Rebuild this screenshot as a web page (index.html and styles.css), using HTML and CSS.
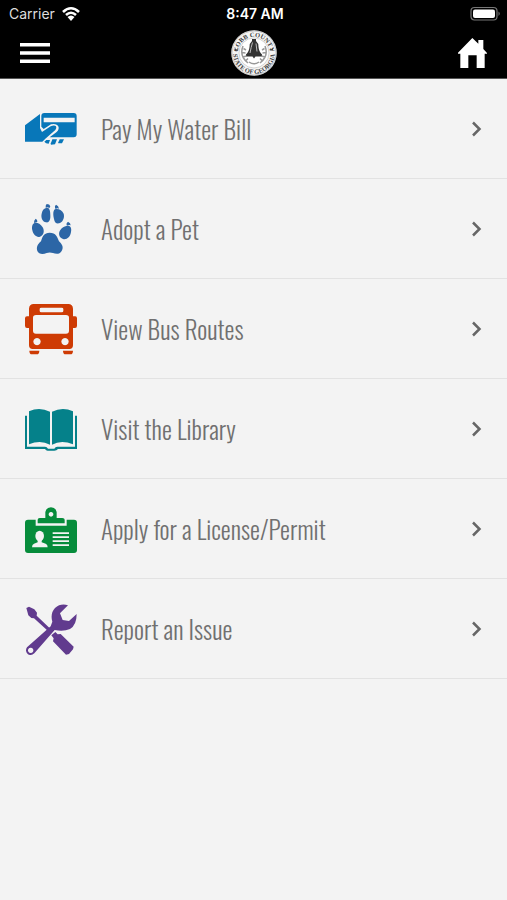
FILE: index.html
```html
<!DOCTYPE html>
<html lang="en">
<head>
<meta charset="utf-8">
<meta name="viewport" content="width=device-width, initial-scale=1">
<title>Cobb County</title>
<link rel="stylesheet" href="styles.css">
</head>
<body>
<header class="header">
  <div class="status">
    <div class="carrier">
      <span>Carrier</span>
      <svg width="20" height="16" viewBox="0 0 20 16" aria-hidden="true">
        <path d="M2 6Q10-1.500 18 6M5 9Q10 4.500 15 9" fill="none" stroke="#fff" stroke-width="2.600"/>
        <path d="M6.500 11Q10 8 13.500 11L10 15Z" fill="#fff"/>
      </svg>
    </div>
    <span class="time">8:47 AM</span>
    <svg class="battery" width="31" height="16" viewBox="0 0 31 16" aria-hidden="true">
      <rect x="1" y="1.500" width="26" height="12.500" rx="3.500" fill="#000" stroke="#777" stroke-width="1.200"/>
      <rect x="3" y="3.500" width="22" height="8.500" rx="2" fill="#fff"/>
      <path d="M28.500 5.500Q31 7.500 28.500 10Z" fill="#777"/>
    </svg>
  </div>
  <nav class="nav">
    <button class="nav-button" type="button" aria-label="Menu">
      <svg width="30" height="20" viewBox="0 0 30 20"><path d="M0 0h30v3.500H0zM0 8.250h30v3.500H0zM0 16.500h30v3.500H0z" fill="#fff"/></svg>
    </button>
    <svg class="seal" width="46" height="46" viewBox="0 0 92 92" role="img" aria-label="Cobb County seal">
      <defs>
        <path id="arc-top" d="M14 46A32 32 0 0 1 78 46"/>
        <path id="arc-bottom" d="M4 46A42 42 0 0 0 88 46"/>
      </defs>
      <circle cx="46" cy="46" r="45.500" fill="#f4f4f4"/>
      <circle cx="46" cy="46" r="44" fill="none" stroke="#999" stroke-width="1"/>
      <circle cx="46" cy="46" r="30" fill="#fff" stroke="#aaa" stroke-width="1"/>
      <text class="seal-text"><textPath href="#arc-top" startOffset="50%" text-anchor="middle">COBB COUNTY</textPath></text>
      <text class="seal-text"><textPath href="#arc-bottom" startOffset="50%" text-anchor="middle">STATE OF GEORGIA</textPath></text>
      <path d="M8 36l3 3 3-3-1 5-5 0zM84 36l-3 3-3-3 1 5 5 0z" fill="#444"/>
      <path d="M42 18h8v4q5 4 5 12 1 10 7 15v4H49l-3 4-3-4H30v-4q6-5 7-15 0-8 5-12z" fill="#333"/>
      <path d="M43 25q-3 10-5 21M50 27l2 16" stroke="#bbb" stroke-width="2" fill="none"/>
      <path d="M24 32q-8 20 10 34M68 32q8 20-10 34M25 37l5 3M22 45l7 1M24 54l7-2M29 62l5-5M67 37l-5 3M70 45l-7 1M68 54l-7-2M63 62l-5-5M36 64q10 7 20 0" fill="none" stroke="#999" stroke-width="3"/>
    </svg>
    <a class="nav-button" href="#" aria-label="Home">
      <svg width="29" height="30" viewBox="0 0 87 90"><path d="M43 0l18 17v-11h15v27l11 12v2h-7v43H56V52H31v38H7V47H0v-3z" fill="#fff"/></svg>
    </a>
  </nav>
</header>
<main>
  <ul class="list">
    <li><a class="row" href="#">
      <svg class="icon" viewBox="30 9 156 156" fill="#0877b9" aria-hidden="true">
        <path d="M30 76L75 42V84L81 96 107 79Q118 74 123 79 126 84 121 90L91 116 82 125H30z"/>
        <path fill-rule="evenodd" d="M88 39H176Q185 39 185 48V103Q185 112 176 112H104L124 97Q135 86 129 77 122 69 108 73L86 87 79 80V48Q79 39 88 39zM86 53V67H179V53z"/>
        <path d="M94 120h11l-4 11q-9 0-13-6zM112 118h14l-6 15-12 1q-3-3 1-8zM134 118h13l-6 12h-11q-2-3 2-7z"/>
      </svg>
      <span class="label">Pay My Water Bill</span>
      <svg class="chevron" viewBox="0 0 12 16" aria-hidden="true"><path d="M2 1.500L8.500 8 2 14.500"/></svg>
    </a></li>
    <li><a class="row" href="#">
      <svg class="icon" viewBox="15 24 156 156" fill="#2c66a6" aria-hidden="true">
        <path d="M78 39C88 36 91 47 91 61C92 77 86 84 78 82C68 80 62 69 65 56C67 46 71 41 78 39z"/>
        <path d="M108 42C98 43 99 59 102 72C104 84 111 88 120 84C130 79 134 66 131 56C127 46 117 41 108 42z"/>
        <path d="M47 83C38 83 34 94 37 106C40 120 50 128 60 125C72 121 74 107 68 97C62 87 54 83 47 83z"/>
        <path d="M139 93C150 89 156 98 153 111C151 126 140 135 129 132C117 128 114 115 121 105C127 97 132 95 139 93z"/>
        <path d="M80 27q9 0 11 7l-3 6q-4-5-11-2-1-7 3-11zM108 29q8 3 9 12-5-3-10 1-5-7 1-13zM47 71q6 3 5 10l-10 3q-1-8 5-13zM144 80q8 3 8 11-6-3-11 1-4-7 3-12z"/>
        <path d="M89 113C108 113 112 126 117 139C128 149 131 158 125 168C119 179 107 177 99 174Q89 171 80 174C69 179 56 178 52 168C48 156 53 148 63 139C67 125 72 113 89 113z"/>
      </svg>
      <span class="label">Adopt a Pet</span>
      <svg class="chevron" viewBox="0 0 12 16" aria-hidden="true"><path d="M2 1.500L8.500 8 2 14.500"/></svg>
    </a></li>
    <li><a class="row" href="#">
      <svg class="icon" viewBox="30 24 156 156" fill="#ce3b04" aria-hidden="true">
        <path fill-rule="evenodd" d="M56 27H160Q173 27 174 41V64H181Q186 64 186 70V92Q186 99 180 99H174V151Q174 162 163 162H53Q42 162 42 151V99H36Q30 99 30 92V70Q30 64 36 64H42V41Q43 27 56 27zM79 38Q74 38 74 42V48Q74 52 79 52H140Q145 52 145 48V42Q145 38 140 38zM63 60Q54 60 54 68V107Q54 116 63 116H153Q162 116 162 107V68Q162 60 153 60zM66 129a11 11 0 1 0 .1 0zM150 129a11 11 0 1 0 .1 0z"/>
        <path d="M43 167H73Q73 178 65 178H51Q43 178 43 167zM144 167H174Q174 178 166 178H152Q144 178 144 167z"/>
      </svg>
      <span class="label">View Bus Routes</span>
      <svg class="chevron" viewBox="0 0 12 16" aria-hidden="true"><path d="M2 1.500L8.500 8 2 14.500"/></svg>
    </a></li>
    <li><a class="row" href="#">
      <svg class="icon" viewBox="30 9 156 156" fill="#05818a" aria-hidden="true">
        <path d="M42 34Q73 19 105 35V134Q76 119 42 133zM111 35Q143 19 174 34V133Q139 119 111 134z"/>
        <path d="M30 47H36V140H90Q96 140 99 146H118Q121 140 127 140H180V47H186V147H129Q125 152 118 152H98Q93 152 90 147H30z"/>
      </svg>
      <span class="label">Visit the Library</span>
      <svg class="chevron" viewBox="0 0 12 16" aria-hidden="true"><path d="M2 1.500L8.500 8 2 14.500"/></svg>
    </a></li>
    <li><a class="row" href="#">
      <svg class="icon" viewBox="30 9 156 156" fill="#068c3b" aria-hidden="true">
        <path fill-rule="evenodd" d="M68 70V59Q68 54 74 54H91V36Q94 22 108 22 122 22 125 36V54H142Q149 54 149 59V70zM108 36a7 7 0 1 0 .1 0z"/>
        <path d="M39 59H62V77H155V59H177Q186 59 186 68V150Q186 159 177 159H39Q30 159 30 150V68Q30 59 39 59z"/>
        <g fill="#f3f3f3"><ellipse cx="74" cy="108" rx="13" ry="16"/><path d="M68 118H80V127L92 131Q98 133 98 142H51Q51 133 57 131L68 127zM113 97h49v5h-49zM113 109h49v5h-49zM113 121h49v5h-49zM113 133h49v5h-49z"/></g>
      </svg>
      <span class="label">Apply for a License/Permit</span>
      <svg class="chevron" viewBox="0 0 12 16" aria-hidden="true"><path d="M2 1.500L8.500 8 2 14.500"/></svg>
    </a></li>
    <li><a class="row" href="#">
      <svg class="icon" viewBox="30 24 156 156" fill="#613b8e" aria-hidden="true">
        <path d="M34 39L42 35 58 43 66 53 65 62 106 101 99 108 57 70 49 69 40 61z"/>
        <path fill-rule="evenodd" d="M159 31Q137 24 120 39 105 55 112 80L107 94 36 157Q29 168 38 177 47 184 58 175L119 105Q145 111 165 102 185 90 185 57L162 78 143 75 135 55zM47 158a8 8 0 1 0 .1 0z"/>
        <path d="M109 121L121 111 128 118 137 117 176 155 174 163 162 177 153 179 114 139 116 130z"/>
      </svg>
      <span class="label">Report an Issue</span>
      <svg class="chevron" viewBox="0 0 12 16" aria-hidden="true"><path d="M2 1.500L8.500 8 2 14.500"/></svg>
    </a></li>
  </ul>
</main>
</body>
</html>
```
FILE: styles.css
```css
* {
  box-sizing: border-box;
}

body {
  margin: 0;
  min-height: 100vh;
  background: #f3f3f3;
  font-family: Oswald, "Liberation Sans Narrow", "Open Sans Condensed", "Roboto Condensed", "Liberation Sans", sans-serif;
}

.header {
  background: #000;
  color: #fff;
  font-family: Inter, sans-serif;
}

.status,
.nav {
  display: grid;
  grid-template-columns: 1fr auto 1fr;
  align-items: center;
}

.status {
  height: 27px;
  padding: 0 6px 0 9px;
  font-size: 14px;
  line-height: 27px;
}

.carrier {
  display: flex;
  align-items: center;
  gap: 6px;
  color: #ddd;
}

.time {
  font-weight: 600;
}

.battery {
  justify-self: end;
}

.nav {
  height: 52px;
  padding: 0 20px;
  border-bottom: 1px solid #555;
}

.nav-button {
  display: flex;
  padding: 0;
  border: 0;
  background: none;
  justify-self: start;
}

.nav-button:last-child {
  justify-self: end;
}

.seal-text {
  font: 700 13px "Liberation Serif", serif;
  fill: #444;
}

.list {
  margin: 0;
  padding: 0;
  list-style: none;
}

.row {
  display: flex;
  align-items: center;
  gap: 24px;
  height: 100px;
  padding: 0 24px 0 25px;
  border-bottom: 1px solid #e2e2e2;
  color: #707070;
  text-decoration: none;
}

.icon {
  flex: none;
  width: 52px;
  height: 52px;
}

.label {
  flex: 1;
  font-size: 25px;
  font-weight: 300;
  line-height: 32px;
}

.chevron {
  flex: none;
  width: 12px;
  height: 16px;
  fill: none;
  stroke: #666;
  stroke-width: 2.5;
}
```
